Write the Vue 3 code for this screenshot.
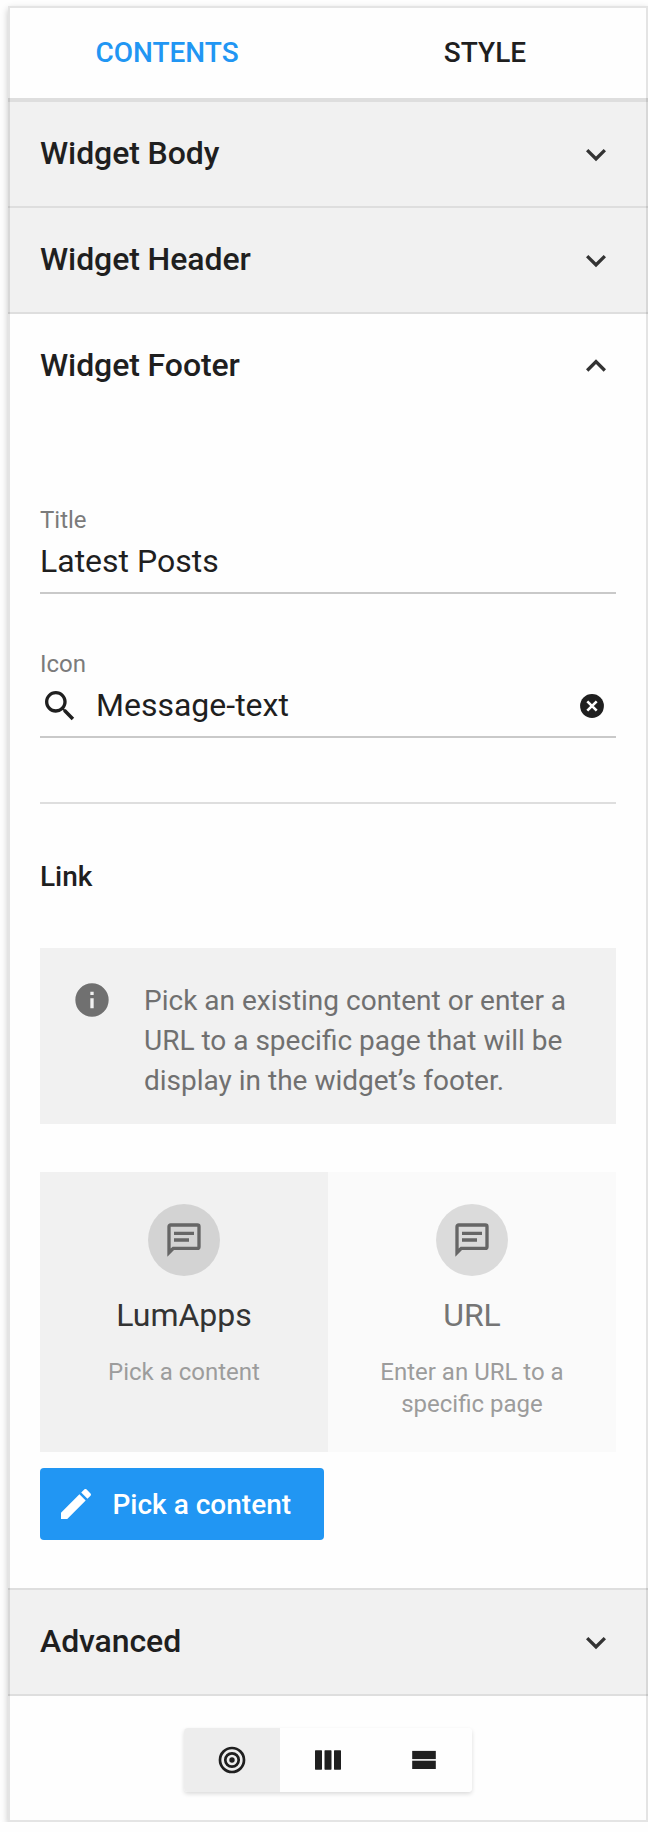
<script setup>
import { ref } from 'vue'

const tab = ref('contents')
const source = ref('lumapps')
const layout = ref('target')

const sections = ['Widget Body', 'Widget Header']
const sources = [
  { id: 'lumapps', name: 'LumApps', hint: 'Pick a content' },
  { id: 'url', name: 'URL', hint: 'Enter an URL to a specific page' },
]

const chevronDown = 'M7.41 8.940L12 13.530l4.590-4.590L18 10.360l-6 6-6-6z'
const chevronUp = 'M7.41 15.41L12 10.83l4.59 4.58L18 14l-6-6-6 6z'
</script>

<template>
  <main class="panel">
    <nav class="tabs">
      <button class="tab" :class="{ active: tab === 'contents' }" @click="tab = 'contents'">CONTENTS</button>
      <button class="tab" :class="{ active: tab === 'style' }" @click="tab = 'style'">STYLE</button>
    </nav>

    <header v-for="name in sections" :key="name" class="section shaded">
      <h2>{{ name }}</h2>
      <svg class="icon" viewBox="0 0 24 24"><path :d="chevronDown" /></svg>
    </header>

    <section class="open">
      <header class="section">
        <h2>Widget Footer</h2>
        <svg class="icon" viewBox="0 0 24 24"><path :d="chevronUp" /></svg>
      </header>

      <div class="body">
        <div class="field">
          <span class="label">Title</span>
          <div class="value"><span>Latest Posts</span></div>
        </div>

        <div class="field">
          <span class="label">Icon</span>
          <div class="value">
            <svg class="icon search" viewBox="0 0 24 24">
              <path d="M9.5 3A6.5 6.5 0 0 1 16 9.500c0 1.610-.59 3.090-1.560 4.230l.27.27h.79l5 5-1.500 1.500-5-5v-.79l-.27-.27A6.516 6.516 0 0 1 9.500 16a6.500 6.500 0 0 1 0-13m0 2C7 5 5 7 5 9.500S7 14 9.500 14 14 12 14 9.500 12 5 9.500 5z" />
            </svg>
            <span>Message-text</span>
            <svg class="clear" viewBox="0 0 24 24">
              <circle cx="12" cy="12" r="11.9" />
              <path d="M7.300 7.300l9.400 9.400M16.700 7.300l-9.400 9.400" />
            </svg>
          </div>
        </div>

        <hr />
        <h3>Link</h3>

        <div class="info">
          <svg class="icon" viewBox="0 0 24 24">
            <path d="M13 9h-2V7h2m0 10h-2v-6h2M12 2a10 10 0 1 0 0 20 10 10 0 0 0 0-20z" />
          </svg>
          <p>Pick an existing content or enter a URL to a specific page that will be display in the widget’s footer.</p>
        </div>

        <div class="cards">
          <div
            v-for="s in sources"
            :key="s.id"
            class="card"
            :class="{ selected: source === s.id }"
            @click="source = s.id"
          >
            <span class="badge">
              <svg class="icon" viewBox="0 0 24 24">
                <path d="M4 2h16a2 2 0 0 1 2 2v12a2 2 0 0 1-2 2H6l-4 4V4c0-1.110.89-2 2-2m0 2v13.170L5.170 16H20V4H4m2 3h12v2H6V7m0 4h9v2H6v-2z" />
              </svg>
            </span>
            <strong>{{ s.name }}</strong>
            <small>{{ s.hint }}</small>
          </div>
        </div>

        <button class="pick">
          <svg class="icon" viewBox="0 0 24 24">
            <path d="M20.710 7.040c.39-.39.39-1.040 0-1.410l-2.340-2.340c-.37-.39-1.020-.39-1.410 0l-1.840 1.830 3.750 3.750M3 17.250V21h3.750L17.810 9.930l-3.750-3.750z" />
          </svg>
          <span>Pick a content</span>
        </button>
      </div>
    </section>

    <header class="section shaded advanced">
      <h2>Advanced</h2>
      <svg class="icon" viewBox="0 0 24 24"><path :d="chevronDown" /></svg>
    </header>

    <div class="switch">
      <button :class="{ on: layout === 'target' }" @click="layout = 'target'">
        <svg viewBox="0 0 32 32">
          <g fill="none" stroke="currentColor" stroke-width="2.7">
            <circle cx="16" cy="16" r="12" />
            <circle cx="16" cy="16" r="6.700" />
          </g>
          <circle cx="16" cy="16" r="2.700" />
        </svg>
      </button>
      <button :class="{ on: layout === 'columns' }" @click="layout = 'columns'">
        <svg viewBox="0 0 32 32">
          <rect x="3" y="6.300" width="7" height="19.400" rx=".6" />
          <rect x="12.500" y="6.300" width="7" height="19.400" rx=".6" />
          <rect x="22" y="6.300" width="7" height="19.400" rx=".6" />
        </svg>
      </button>
      <button :class="{ on: layout === 'rows' }" @click="layout = 'rows'">
        <svg viewBox="0 0 32 32">
          <rect x="4.200" y="6.900" width="23.600" height="8.200" />
          <rect x="4.200" y="16.700" width="23.600" height="8.300" />
        </svg>
      </button>
    </div>
  </main>
</template>

<style>
body {
  background: #fefefe;
}
</style>

<style scoped>
.panel {
  position: relative;
  box-sizing: border-box;
  width: 640px;
  height: 1816px;
  margin: 6px 0 0 8px;
  padding-top: 2px;
  background: #fefefe;
  box-shadow: 0 3px 7px rgba(0, 0, 0, 0.23);
  color: #1f1f1f;
  font-family: Roboto, "Liberation Sans", sans-serif;
}

/* translucent frame drawn over the rows */
.panel::after {
  content: "";
  position: absolute;
  inset: 0;
  border: 2px solid rgba(0, 0, 0, 0.1);
  pointer-events: none;
}

button {
  border: 0;
  padding: 0;
  background: none;
  color: inherit;
  font: inherit;
}

h2,
h3,
p {
  margin: 0;
}

.icon {
  display: block;
  flex: none;
  width: 40px;
  height: 40px;
  fill: currentColor;
}

.tabs {
  display: flex;
  height: 90px;
  padding-right: 4px;
  border-bottom: 4px solid #dedede;
}

.tab {
  flex: 1;
  padding-bottom: 1px;
  font-size: 28px;
  font-weight: 500;
}

.tab.active {
  color: #2196f3;
}

.section {
  display: flex;
  align-items: center;
  justify-content: space-between;
  height: 104px;
  padding: 0 32px;
}

.section h2 {
  padding-bottom: 2px;
  font-size: 32px;
  font-weight: 500;
  letter-spacing: -0.09px;
  line-height: 38px;
}

.section .icon {
  color: #333;
}

.shaded {
  border-bottom: 2px solid #dedede;
  background: #f1f1f1;
}

.body {
  padding: 86px 32px 48px;
}

.field {
  border-bottom: 2px solid #c9c9c9;
}

.field + .field {
  margin-top: 54px;
}

.label {
  display: block;
  margin-bottom: 6px;
  color: #7b7b7b;
  font-size: 24px;
  line-height: 32px;
}

.value {
  display: flex;
  height: 40px;
  padding-bottom: 10px;
  font-size: 32px;
  line-height: 38px;
}

.search {
  margin-right: 16px;
}

.clear {
  width: 24px;
  height: 24px;
  margin: 8px 12px 0 auto;
  fill: currentColor;
}

.clear path {
  stroke: #fff;
  stroke-width: 2.6;
}

hr {
  height: 2px;
  margin: 64px 0 57px;
  border: 0;
  background: #dedede;
}

h3 {
  font-size: 28px;
  font-weight: 500;
  line-height: 32px;
}

.info {
  display: flex;
  gap: 32px;
  margin-top: 55px;
  padding: 32px 32px 23px;
  background: #f1f1f1;
  color: #707070;
}

.info p {
  margin-top: 1px;
  font-size: 28px;
  line-height: 40px;
}

.cards {
  display: grid;
  grid-template-columns: 1fr 1fr;
  height: 280px;
  margin-top: 48px;
}

.card {
  display: flex;
  flex-direction: column;
  align-items: center;
  padding: 32px 40px 0;
  background: #fafafa;
  color: #757575;
  text-align: center;
}

.card.selected {
  background: #f1f1f1;
  color: #333;
}

.badge {
  display: grid;
  place-items: center;
  width: 72px;
  height: 72px;
  border-radius: 50%;
  background: rgba(0, 0, 0, 0.12);
  color: #666;
}

.card strong {
  margin: 19px 0 21px;
  font-size: 32px;
  font-weight: 400;
  line-height: 40px;
}

.card small {
  color: #9c9c9c;
  font-size: 24px;
  line-height: 32px;
}

.pick {
  display: flex;
  align-items: center;
  gap: 16.500px;
  width: 284px;
  height: 72px;
  margin-top: 16px;
  padding-left: 16px;
  border-radius: 4px;
  background: #2196f3;
  color: #fff;
  font-size: 28px;
  font-weight: 500;
}

.advanced {
  border-top: 2px solid #dedede;
}

.switch {
  display: flex;
  width: 288px;
  height: 64px;
  margin: 32px auto 0;
  overflow: hidden;
  border-radius: 4px;
  box-shadow: 0 2px 4px rgba(0, 0, 0, 0.14);
}

.switch button {
  display: grid;
  flex: 1;
  place-items: center;
  background: #fefefe;
}

.switch .on {
  background: #ededed;
}

.switch svg {
  width: 32px;
  height: 32px;
  fill: currentColor;
}
</style>
